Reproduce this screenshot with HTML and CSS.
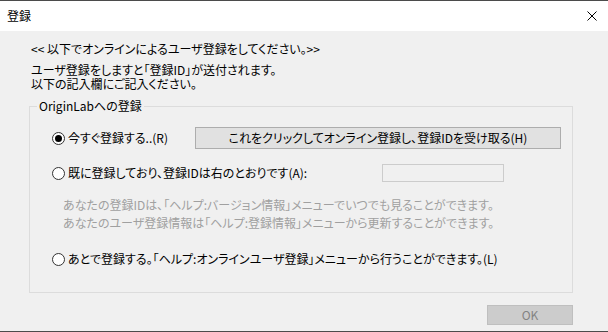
FILE: index.html
```html
<!DOCTYPE html>
<html lang="ja">
<head>
<meta charset="utf-8">
<title>登録</title>
<link rel="stylesheet" href="styles.css">
</head>
<body>
<div class="window">
  <div class="titlebar">
    <span class="title">登録</span>
    <svg class="close" width="10" height="10" viewBox="0 0 10 10"><path d="M0.5 0.5 L9.5 9.5 M9.5 0.5 L0.5 9.5" stroke="#000" stroke-width="1" fill="none"/></svg>
  </div>
  <div class="client">
    <p class="intro">&lt;&lt; 以下でオンラインによるユーザ登録をしてください。&gt;&gt;</p>
    <p class="note">ユーザ登録をしますと「登録ID」が送付されます。<br>以下の記入欄にご記入ください。</p>
    <div class="group">
      <span class="legend">OriginLabへの登録</span>
      <div class="row row1">
        <label class="radio"><span class="dot checked"></span>今すぐ登録する..(R)</label>
        <button class="btn-online">これをクリックしてオンライン登録し、登録IDを受け取る(H)</button>
      </div>
      <div class="row row2">
        <label class="radio"><span class="dot"></span>既に登録しており、登録IDは右のとおりです(A):</label>
        <span class="idbox"></span>
      </div>
      <div class="hints">
        <p>あなたの登録IDは、「ヘルプ:バージョン情報」メニューでいつでも見ることができます。</p>
        <p>あなたのユーザ登録情報は「ヘルプ:登録情報」メニューから更新することができます。</p>
      </div>
      <div class="row row3">
        <label class="radio"><span class="dot"></span>あとで登録する。「ヘルプ:オンラインユーザ登録」メニューから行うことができます。(L)</label>
      </div>
    </div>
    <div class="footer">
      <button class="btn-ok">OK</button>
    </div>
  </div>
</div>
</body>
</html>
```
FILE: styles.css
```css
* { box-sizing: border-box; }
html, body { margin: 0; padding: 0; }
body {
  width: 608px;
  height: 332px;
  font-family: "Noto Sans CJK JP", "Noto Sans", sans-serif;
  font-size: 12px;
  font-feature-settings: "palt";
  color: #000;
  background: #f0f0f0;
}
p { margin: 0; }
.window {
  width: 608px;
  height: 332px;
  display: flex;
  flex-direction: column;
  border-top: 1px solid #4b4b4b;
  border-bottom: 1px solid #4b4b4b;
}
.titlebar {
  height: 30px;
  flex: none;
  background: #fff;
  display: flex;
  align-items: center;
  justify-content: space-between;
  padding: 0 11px 0 7px;
}
.title { font-size: 12px; line-height: 14px; }
.close { display: block; }
.client {
  flex: 1;
  background: #f0f0f0;
  padding: 11px 35px 0 29px;
  display: flex;
  flex-direction: column;
}
.intro { line-height: 13px; margin-left: 2px; }
.note { line-height: 14px; margin: 8px 0 0 2px; }
.group {
  position: relative;
  margin-top: 15px;
  height: 187px;
  flex: none;
  border: 1px solid #dcdcdc;
  padding: 20px 11px 0 22px;
}
.legend {
  position: absolute;
  left: 7px;
  top: -8px;
  line-height: 14px;
  padding: 0 2px;
  background: #f0f0f0;
}
.row { display: flex; align-items: center; }
.row1 { height: 22px; }
.row2 { height: 18px; margin-top: 15px; }
.row3 { height: 14px; margin-top: 20px; }
.radio { display: flex; align-items: center; line-height: 14px; white-space: nowrap; }
.dot {
  width: 13px;
  height: 13px;
  border-radius: 50%;
  border: 1px solid #333;
  background: #fff;
  margin-right: 3px;
  position: relative;
  flex: none;
}
.dot.checked::after {
  content: "";
  position: absolute;
  left: 2px;
  top: 2px;
  width: 7px;
  height: 7px;
  border-radius: 50%;
  background: #000;
}
.btn-online {
  margin-left: auto;
  width: 366px;
  height: 22px;
  border: 1px solid #adadad;
  background: #e1e1e1;
  font: inherit;
  font-feature-settings: "palt";
  color: #000;
  padding: 0;
  line-height: 18px;
}
.idbox {
  margin-left: auto;
  margin-right: 57px;
  width: 122px;
  height: 18px;
  border: 1px solid #cccccc;
  background: #f0f0f0;
}
.hints { margin: 14px 0 0 11px; color: #a0a0a0; }
.hints p { line-height: 18px; }
.footer {
  display: flex;
  justify-content: flex-end;
  margin-top: 12px;
}
.btn-ok {
  width: 86px;
  height: 20px;
  border: 1px solid #bfbfbf;
  background: #cccccc;
  color: #838383;
  font: inherit;
  padding: 0;
  line-height: 18px;
}
```
